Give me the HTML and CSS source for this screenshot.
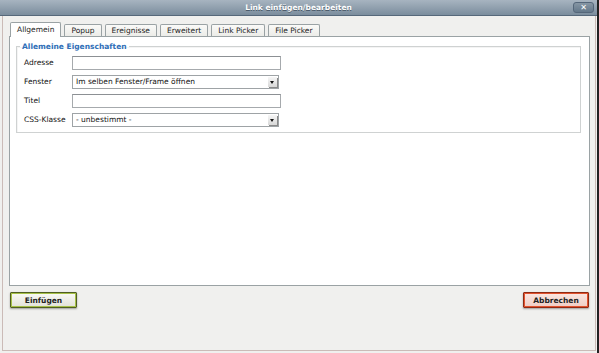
FILE: index.html
```html
<!DOCTYPE html>
<html lang="de">
<head>
	<meta charset="UTF-8">
	<title>Link einfügen/bearbeiten</title>
	<link rel="stylesheet" href="styles.css">
</head>
<body>
	<div class="dialog">
		<div class="titlebar">
			<span class="title">Link einfügen/bearbeiten</span>
			<span class="close">✕</span>
		</div>
		<div class="frame">
			<div class="tabs">
				<span class="tab active">Allgemein</span>
				<span class="tab">Popup</span>
				<span class="tab">Ereignisse</span>
				<span class="tab">Erweitert</span>
				<span class="tab">Link Picker</span>
				<span class="tab">File Picker</span>
			</div>
			<div class="panel">
				<fieldset class="group">
					<legend>Allemeine Eigenschaften</legend>
					<div class="row">
						<label>Adresse</label>
						<span class="field text"></span>
					</div>
					<div class="row">
						<label>Fenster</label>
						<span class="field select">Im selben Fenster/Frame öffnen<span class="arrow"></span></span>
					</div>
					<div class="row">
						<label>Titel</label>
						<span class="field text"></span>
					</div>
					<div class="row">
						<label>CSS-Klasse</label>
						<span class="field select">- unbestimmt -<span class="arrow"></span></span>
					</div>
				</fieldset>
			</div>
			<div class="buttons">
				<button class="btn insert">Einfügen</button>
				<button class="btn cancel">Abbrechen</button>
			</div>
		</div>
	</div>
</body>
</html>
```

FILE: styles.css
```css
body{
	margin: 0;
	font-family: "DejaVu Sans", Verdana, sans-serif;
	font-size: 7.5px;
	color: #111;
}
.dialog{
	width: 599px;
	height: 353px;
	display: flex;
	flex-direction: column;
	background: #f0f0ee;
	box-sizing: border-box;
	border-right: 2px solid #222;
}
.titlebar{
	height: 16px;
	flex: none;
	display: flex;
	align-items: center;
	justify-content: center;
	position: relative;
	background: linear-gradient(#a7b4c0, #7b8d9d);
	border-bottom: 1px solid #56687a;
	box-sizing: border-box;
}
.title{
	color: #fff;
	font-weight: bold;
	font-size: 7.5px;
	text-shadow: 0 1px 0 #4c5c6b;
}
.close{
	position: absolute;
	right: 3px;
	top: 2px;
	width: 21px;
	height: 11px;
	box-sizing: border-box;
	border: 1px solid #55677a;
	border-radius: 3px;
	background: linear-gradient(#8696a4, #64788a);
	color: #fff;
	font-size: 8px;
	font-weight: bold;
	line-height: 9px;
	text-align: center;
}
.frame{
	flex: 1;
	margin: 0 1px 2px 2px;
	padding: 0 5px 0 6px;
	border: 1px solid #cbbbb7;
	border-top: 0;
	display: flex;
	flex-direction: column;
}
.tabs{
	display: flex;
	align-items: flex-end;
	gap: 3px;
	height: 14px;
	margin-top: 6px;
	padding-left: 1px;
	position: relative;
	z-index: 1;
}
.tab{
	height: 12px;
	box-sizing: border-box;
	padding: 0 6px;
	border: 1px solid #9aa2a4;
	border-bottom: 0;
	border-radius: 2px 2px 0 0;
	background: linear-gradient(#fafaf8, #ecece8);
	line-height: 11px;
	color: #222;
}
.tab.active{
	height: 15px;
	margin-bottom: -1px;
	padding: 0 6px;
	background: #fff;
	line-height: 14px;
}
.panel{
	height: 250px;
	box-sizing: border-box;
	border: 1px solid #9aa2a4;
	background: #fff;
	padding: 5px 8px 0 6px;
}
.group{
	margin: 0;
	padding: 2px 7px 3px 7px;
	border: 1px solid #cfd2d2;
	box-shadow: inset 1px 1px 0 #f4f4f4;
}
.group legend{
	padding: 0 2px;
	margin-left: -4px;
	color: #2f6fb8;
	font-weight: bold;
	font-size: 7.5px;
}
.row{
	display: flex;
	align-items: center;
	height: 19px;
}
.row label{
	width: 48px;
	flex: none;
}
.field{
	height: 14px;
	box-sizing: border-box;
	background: #fff;
	border: 1px solid #a6aaad;
	border-top-color: #8c9094;
}
.field.text{
	width: 209px;
}
.field.select{
	width: 207px;
	display: flex;
	align-items: center;
	padding-left: 3px;
	position: relative;
	border-color: #9ea3a6;
}
.arrow{
	position: absolute;
	right: 1px;
	top: 1px;
	width: 9px;
	height: 10px;
	background: linear-gradient(#f6f6f6, #d8d8d8);
	box-shadow: 1px 1px 0 #8a8a8a;
}
.arrow::after{
	content: "";
	position: absolute;
	left: 2px;
	top: 4px;
	border-left: 2.5px solid transparent;
	border-right: 2.5px solid transparent;
	border-top: 3px solid #111;
}
.buttons{
	display: flex;
	justify-content: space-between;
	margin-top: 6px;
	padding: 0 1px 0 1px;
}
.btn{
	width: 67px;
	height: 16px;
	padding: 0;
	font-family: "DejaVu Sans", Verdana, sans-serif;
	font-size: 7.5px;
	font-weight: bold;
	color: #222;
	border-radius: 1px;
}
.insert{
	border: 1px solid #4f5e22;
	box-shadow: inset 0 0 0 1px #a6c048, 0 1px 2px rgba(0,0,0,0.35);
	background: linear-gradient(#fafaf6, #e2e2d8);
}
.cancel{
	width: 66px;
	border: 1px solid #8e2a14;
	box-shadow: inset 0 0 0 1px #e2532f, 0 1px 2px rgba(0,0,0,0.35);
	background: linear-gradient(#fbe7e2, #efcdc4);
}
```
